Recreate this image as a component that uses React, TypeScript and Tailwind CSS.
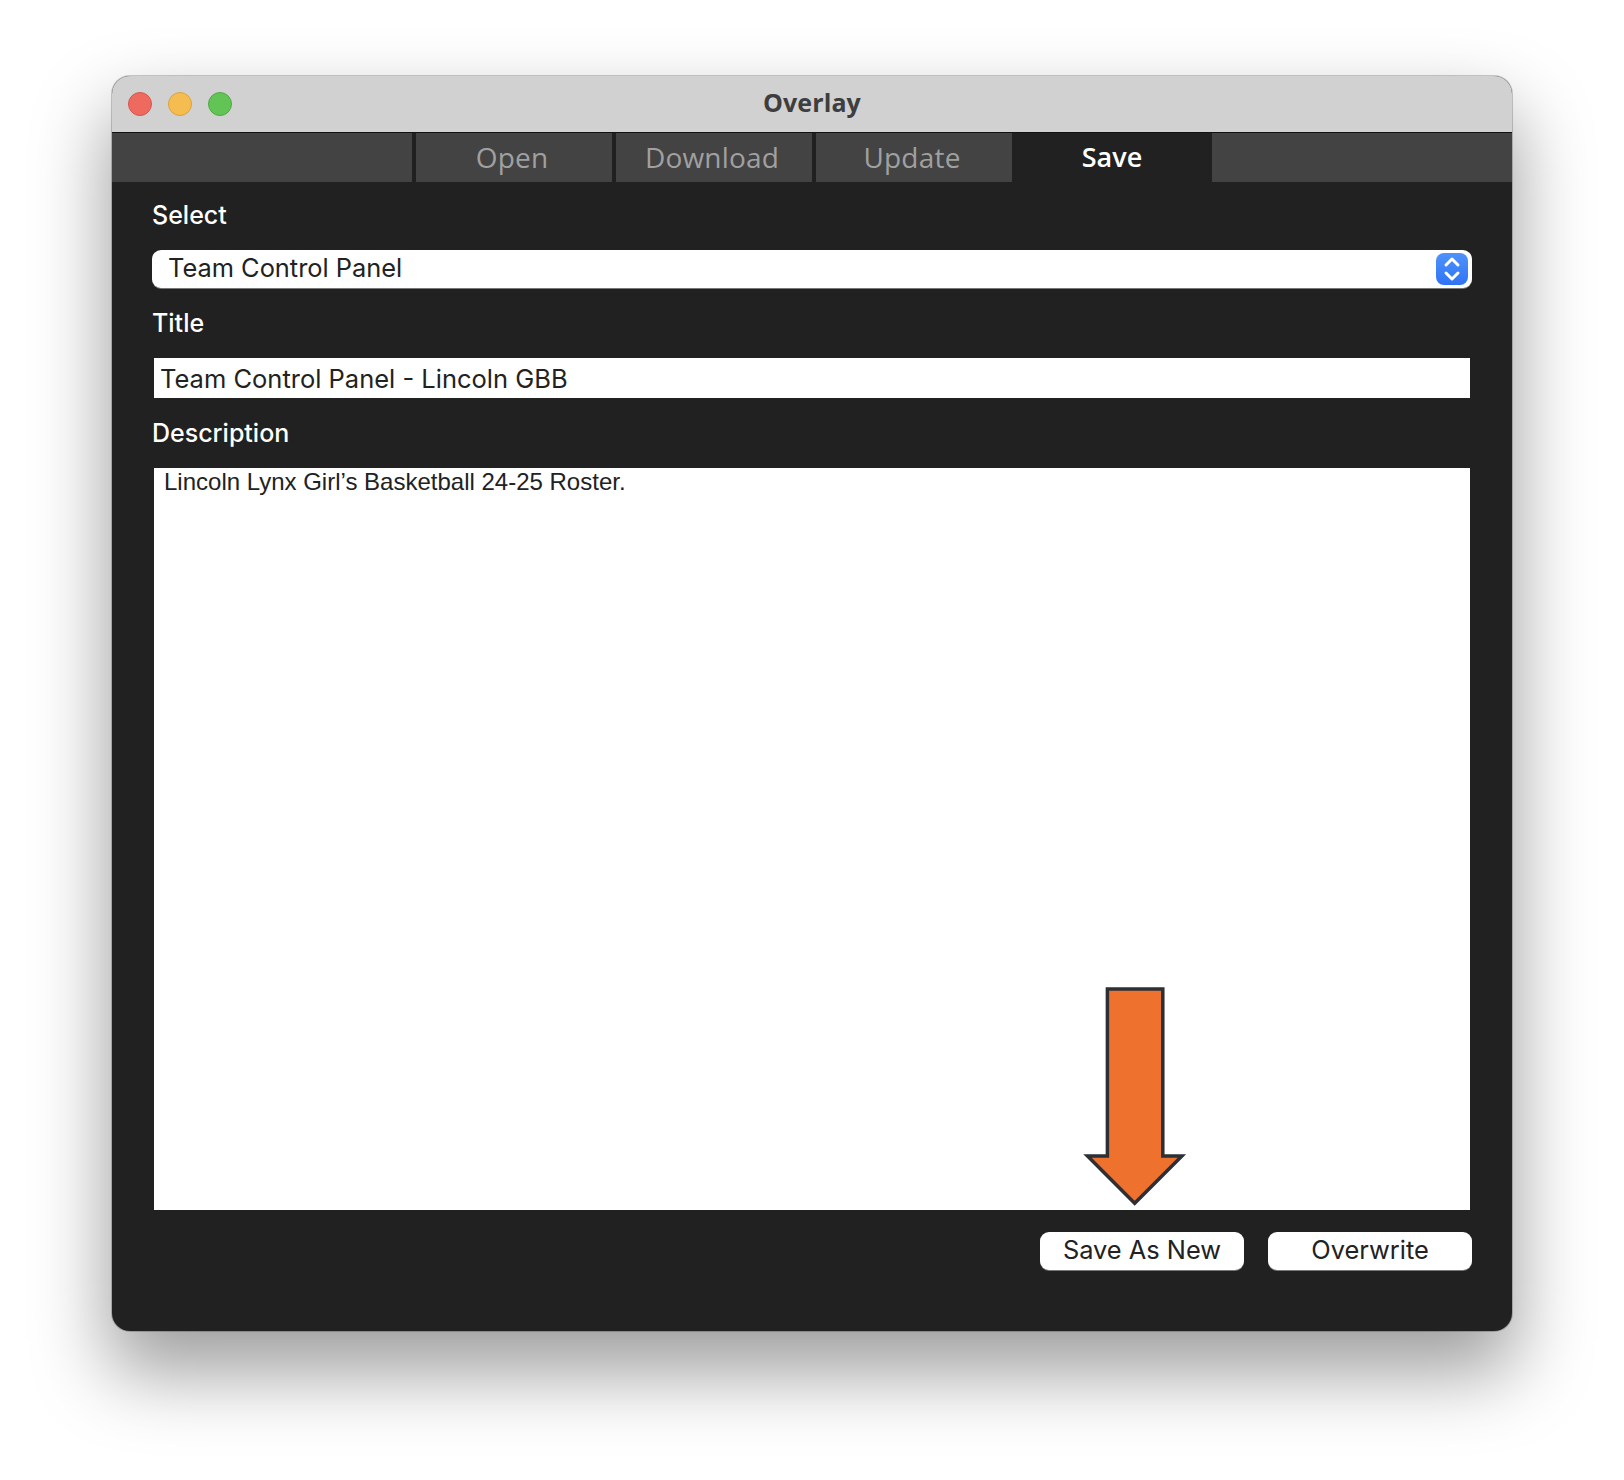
export default function App() {
  const tabs = ["Open", "Download", "Update"];
  return (
    <div className="w-[1624px] h-[1480px] bg-white pl-[112px] pt-[76px] overflow-hidden">
      <div className="w-[1400px] h-[1255px] rounded-[18px] overflow-hidden flex flex-col bg-[#212121] shadow-[0_0_0_1px_rgba(0,0,0,0.2),0_38px_76px_4px_rgba(0,0,0,0.38)]">
        <div className="relative h-[56px] shrink-0 bg-[#d1d1d1] flex items-center justify-center">
          <div className="absolute left-[16px] top-[16px] flex gap-[16px]">
            <div className="w-[24px] h-[24px] rounded-full bg-[#ee6a5f] border border-[#d4574d]" />
            <div className="w-[24px] h-[24px] rounded-full bg-[#f5bd4f] border border-[#d9a23f]" />
            <div className="w-[24px] h-[24px] rounded-full bg-[#61c454] border border-[#52a944]" />
          </div>
          <span className="font-['Open_Sans',sans-serif] font-bold text-[25px] text-[#3e3e3e] tracking-[0.1px] pb-[2px]">Overlay</span>
        </div>
        <div className="h-[1px] shrink-0 bg-[#111111]" />
        <div className="h-[49px] shrink-0 flex bg-[#212121] font-['Open_Sans',sans-serif] text-[28px]">
          <div className="w-[300px] bg-[#434343]" />
          <div className="flex gap-[4px] pl-[4px]">
            {tabs.map((t) => (
              <div key={t} className="w-[196px] bg-[#434343] flex items-center justify-center text-[#a0a0a0] font-medium tracking-[0.2px] pr-[4px] pb-[2px]">{t}</div>
            ))}
          </div>
          <div className="w-[200px] flex items-center justify-center text-white font-semibold text-[27px]">Save</div>
          <div className="flex-1 bg-[#434343]" />
        </div>
        <div className="flex-1 flex flex-col px-[40px] font-['Inter',sans-serif] text-[25.4px]">
          <div className="h-[68px] flex items-center text-white font-medium text-[25px]">Select</div>
          <div className="h-[38px] rounded-[9px] bg-white shadow-[0_1px_0_#777777] flex items-center justify-between pl-[16px] pr-[4px] text-[#222222]">
            <span className="pb-[2px]">Team Control Panel</span>
            <div className="w-[32px] h-[32px] rounded-[8px] bg-gradient-to-b from-[#4f92fb] to-[#2f73f5] flex items-center justify-center">
              <svg width="18" height="26" viewBox="0 0 18 26" fill="none" stroke="white" strokeWidth="3" strokeLinecap="round" strokeLinejoin="round">
                <path d="M3 9 L9 3 L15 9" />
                <path d="M3 17 L9 23 L15 17" />
              </svg>
            </div>
          </div>
          <div className="h-[70px] pt-[2px] flex items-center text-white font-medium text-[25px]">Title</div>
          <div className="h-[40px] mx-[2px] bg-white flex items-center pl-[6px] pt-[3px] text-[25.5px] text-[#222222]">Team Control Panel - Lincoln GBB</div>
          <div className="h-[70px] pt-[2px] flex items-center text-white font-medium text-[25px]">Description</div>
          <div className="relative h-[742px] mx-[2px] bg-white pl-[10px] font-['Liberation_Sans',sans-serif] text-[24px] leading-[28px] text-[#222222]">
            Lincoln Lynx Girl’s Basketball 24-25 Roster.
            <svg className="absolute left-[929px] top-[517px]" width="104" height="222" viewBox="0 0 104 222">
              <path d="M24.4 4 H79.8 V171 H98.9 L51.7 218.2 L4.5 171 H24.4 Z" fill="#ee712d" stroke="#2a3035" strokeWidth="3.5" strokeLinejoin="miter" />
            </svg>
          </div>
          <div className="mt-[22px] flex justify-end gap-[24px]">
            <div className="w-[204px] h-[38px] rounded-[9px] bg-white shadow-[0_1px_0_#777777] flex items-center justify-center pb-[2px] text-[#222222]">Save As New</div>
            <div className="w-[204px] h-[38px] rounded-[9px] bg-white shadow-[0_1px_0_#777777] flex items-center justify-center pb-[2px] text-[#222222]">Overwrite</div>
          </div>
        </div>
      </div>
    </div>
  );
}
